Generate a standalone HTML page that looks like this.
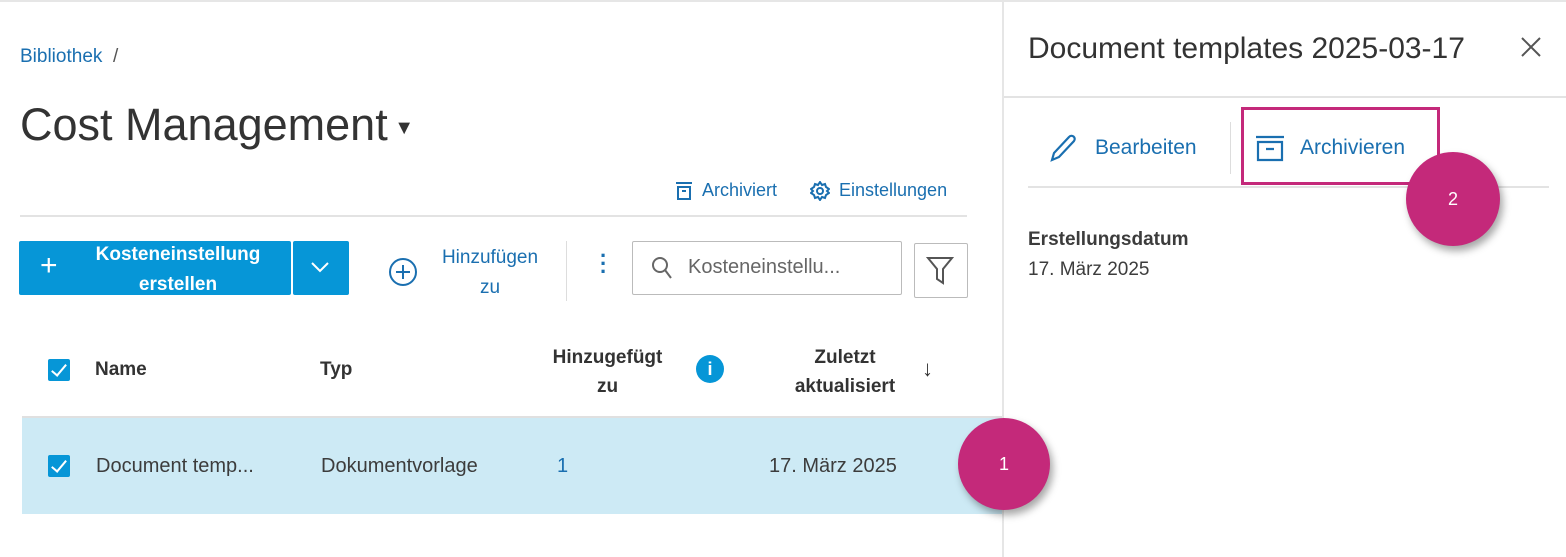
<!DOCTYPE html>
<html><head><meta charset="utf-8"><style>
body{margin:0;width:1566px;height:557px;background:#fff;font-family:"Liberation Sans",sans-serif;color:#3c3c3c;position:relative;overflow:hidden}
.a{position:absolute;white-space:nowrap}
.blue{color:#1a6fb0}
.cb{position:absolute;width:22px;height:22px;background:#0696d7;border-radius:2px}
.cb:after{content:"";position:absolute;left:7px;top:2px;width:6px;height:13px;border:solid #fff;border-width:0 2px 2px 0;transform:rotate(40deg)}
.circ{position:absolute;width:92px;height:92px;border-radius:50%;background:#c4297a;color:#fff;font-size:18px;text-align:center;line-height:92px;box-shadow:3px 5px 8px rgba(0,0,0,.35)}
</style></head><body>
<div class="a" style="left:0;top:0;width:1566px;height:2px;background:#e6e6e6"></div>
<div class="a" style="left:1002px;top:0;width:2px;height:557px;background:#e6e6e6"></div>

<div class="a blue" style="left:20px;top:46px;font-size:19px">Bibliothek <span style="color:#555">&nbsp;/</span></div>
<div class="a" style="left:20px;top:99px;font-size:45px;color:#333">Cost Management <span style="font-size:20px;vertical-align:middle;margin-left:-6px">▼</span></div>

<svg class="a" style="left:675px;top:181px" width="18" height="20" viewBox="0 0 18 20" fill="none" stroke="#1a6fb0" stroke-width="2"><path d="M1 2h16M3 6h12v12H3z M7 10h4"/></svg>
<div class="a blue" style="left:702px;top:180px;font-size:18px">Archiviert</div>
<svg class="a" style="left:810px;top:181px" width="20" height="20" viewBox="0 0 20 20" fill="none" stroke="#1a6fb0" stroke-width="2"><circle cx="10" cy="10" r="3"/><path d="M10 1l2 3 3-1 1 3 3 2-2 2 2 2-3 2-1 3-3-1-2 3-2-3-3 1-1-3-3-2 2-2-2-2 3-2 1-3 3 1z"/></svg>
<div class="a blue" style="left:839px;top:180px;font-size:18px">Einstellungen</div>
<div class="a" style="left:20px;top:215px;width:947px;height:2px;background:#e3e3e3"></div>

<div class="a" style="left:19px;top:241px;width:272px;height:54px;background:#0696d7;border-radius:2px"></div>
<div class="a" style="left:293px;top:241px;width:56px;height:54px;background:#0696d7;border-radius:2px"></div>
<div class="a" style="left:40px;top:249px;color:#fff;font-size:30px;font-weight:300">+</div>
<div class="a" style="left:78px;top:240px;width:200px;color:#fff;font-size:19px;font-weight:bold;text-align:center;line-height:30px">Kosteneinstellung<br>erstellen</div>
<svg class="a" style="left:310px;top:260px" width="20" height="14" viewBox="0 0 20 14" fill="none" stroke="#fff" stroke-width="2"><path d="M2 3l8 8 8-8"/></svg>

<svg class="a" style="left:388px;top:257px" width="30" height="30" viewBox="0 0 30 30" fill="none" stroke="#1a6fb0" stroke-width="2"><circle cx="15" cy="15" r="13"/><path d="M15 8v14M8 15h14"/></svg>
<div class="a blue" style="left:425px;top:243px;width:130px;font-size:19px;text-align:center;line-height:30px">Hinzufügen<br>zu</div>
<div class="a" style="left:566px;top:241px;width:1px;height:60px;background:#ddd"></div>
<div class="a blue" style="left:600px;top:252px;font-size:22px;font-weight:bold;line-height:8px">·<br>·<br>·</div>
<div class="a" style="left:632px;top:241px;width:268px;height:52px;border:1px solid #bbb;border-radius:2px"></div>
<svg class="a" style="left:651px;top:256px" width="22" height="24" viewBox="0 0 22 24" fill="none" stroke="#666" stroke-width="2"><circle cx="9" cy="9" r="7"/><path d="M14 14l6 8"/></svg>
<div class="a" style="left:688px;top:256px;font-size:20px;color:#666">Kosteneinstellu...</div>
<div class="a" style="left:914px;top:243px;width:52px;height:53px;border:1px solid #bbb;border-radius:2px"></div>
<svg class="a" style="left:926px;top:255px" width="28" height="32" viewBox="0 0 28 32" fill="none" stroke="#555" stroke-width="2"><path d="M2 3h24l-9 11v14l-6-4V14z"/></svg>

<div class="cb" style="left:48px;top:359px"></div>
<div class="a" style="left:95px;top:359px;font-size:19px;font-weight:bold;color:#333">Name</div>
<div class="a" style="left:320px;top:359px;font-size:19px;font-weight:bold;color:#333">Typ</div>
<div class="a" style="left:540px;top:343px;width:135px;font-size:19px;font-weight:bold;color:#333;text-align:center;line-height:29px">Hinzugefügt<br>zu</div>
<div class="a" style="left:696px;top:355px;width:28px;height:28px;border-radius:50%;background:#0696d7;color:#fff;font-weight:bold;text-align:center;line-height:28px;font-size:18px">i</div>
<div class="a" style="left:780px;top:343px;width:130px;font-size:19px;font-weight:bold;color:#333;text-align:center;line-height:29px">Zuletzt<br>aktualisiert</div>
<div class="a" style="left:922px;top:356px;font-size:22px;color:#333">↓</div>

<div class="a" style="left:22px;top:416px;width:980px;height:96px;background:#cdeaf5;border-top:2px solid #e0e0e0"></div>
<div class="cb" style="left:48px;top:455px"></div>
<div class="a" style="left:96px;top:455px;font-size:20px;color:#3c3c3c">Document temp...</div>
<div class="a" style="left:321px;top:455px;font-size:20px;color:#3c3c3c">Dokumentvorlage</div>
<div class="a blue" style="left:557px;top:455px;font-size:20px">1</div>
<div class="a" style="left:769px;top:455px;font-size:20px;color:#3c3c3c">17. März 2025</div>
<div class="circ" style="left:958px;top:418px">1</div>

<div class="a" style="left:1028px;top:32px;font-size:30px;color:#333">Document templates 2025-03-17</div>
<svg class="a" style="left:1520px;top:36px" width="22" height="22" viewBox="0 0 22 22" stroke="#555" stroke-width="2"><path d="M2 2l18 18M20 2L2 20"/></svg>
<div class="a" style="left:1004px;top:96px;width:562px;height:2px;background:#e3e3e3"></div>
<svg class="a" style="left:1048px;top:133px" width="32" height="30" viewBox="0 0 32 30" fill="none" stroke="#1a6fb0" stroke-width="2.2"><path d="M4 27l2-7L21 4a3 3 0 0 1 5 4L11 24z"/></svg>
<div class="a blue" style="left:1095px;top:136px;font-size:21px">Bearbeiten</div>
<div class="a" style="left:1230px;top:122px;width:1px;height:52px;background:#ddd"></div>
<div class="a" style="left:1241px;top:107px;width:193px;height:72px;border:3px solid #c4297a"></div>
<svg class="a" style="left:1254px;top:135px" width="32" height="28" viewBox="0 0 32 28" fill="none" stroke="#1a6fb0" stroke-width="2.2"><path d="M2 2h28M4 7h24v18H4z M12 14h8"/></svg>
<div class="a blue" style="left:1300px;top:136px;font-size:21px">Archivieren</div>
<div class="a" style="left:1028px;top:186px;width:521px;height:2px;background:#e3e3e3"></div>
<div class="circ" style="left:1406px;top:152px;width:94px;height:94px;line-height:94px">2</div>
<div class="a" style="left:1028px;top:229px;font-size:19px;font-weight:bold;color:#3c3c3c">Erstellungsdatum</div>
<div class="a" style="left:1028px;top:259px;font-size:19px;color:#3c3c3c">17. März 2025</div>
</body></html>
